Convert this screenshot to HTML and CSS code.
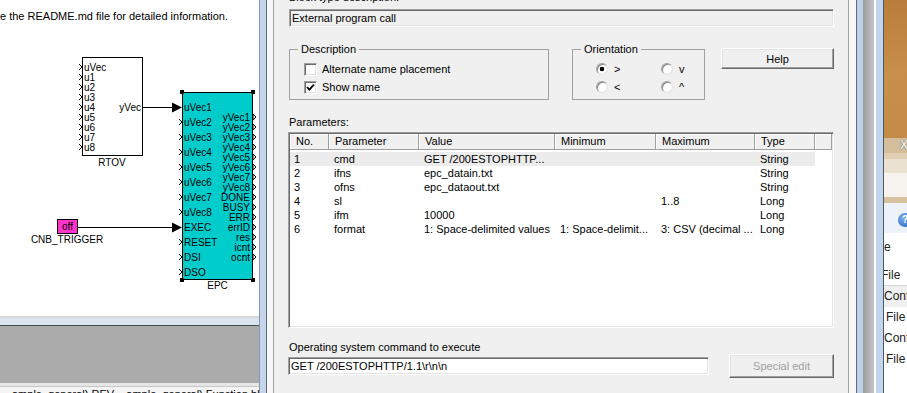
FILE: index.html
```
<!doctype html>
<html>
<head>
<meta charset="UTF-8">
<link rel="stylesheet" href="styles.css">
</head>
<body>

<div class="canvas">
  <svg class="diagram" width="259" height="316" viewBox="0 0 259 316">
    <text class="note" x="0" y="20">e the README.md file for detailed information.</text>

    <!-- RTOV -->
    <rect x="82.5" y="57.5" width="60" height="98" fill="#fff" stroke="#000"/>
    <path fill="none" stroke="#000" d="M79 64l3 3-3 3M79 74l3 3-3 3M79 84l3 3-3 3M79 94l3 3-3 3M79 104l3 3-3 3M79 114l3 3-3 3M79 124l3 3-3 3M79 134l3 3-3 3M79 144l3 3-3 3"/>
    <text x="84" y="70.5">uVec</text>
    <text x="84" y="80.5">u1</text>
    <text x="84" y="90.5">u2</text>
    <text x="84" y="100.5">u3</text>
    <text x="84" y="110.5">u4</text>
    <text x="84" y="120.5">u5</text>
    <text x="84" y="130.5">u6</text>
    <text x="84" y="140.5">u7</text>
    <text x="84" y="150.5">u8</text>
    <text x="141" y="110.5" text-anchor="end">yVec</text>
    <text x="112" y="165.5" text-anchor="middle">RTOV</text>

    <!-- wires -->
    <path stroke="#000" d="M143 107.5H173M77 227.5H173"/>
    <polygon points="172,102.5 182,107.5 172,112.5"/>
    <polygon points="172,222.5 182,227.5 172,232.5"/>

    <!-- EPC -->
    <rect x="182.5" y="92.5" width="70" height="187" fill="#00cccc" stroke="#000"/>
    <rect x="180" y="90" width="4" height="4"/><rect x="183" y="93" width="1" height="1" fill="#f00"/>
    <rect x="251" y="90" width="4" height="4"/><rect x="251" y="93" width="1" height="1" fill="#f00"/>
    <rect x="180" y="278" width="4" height="4"/><rect x="183" y="278" width="1" height="1" fill="#f00"/>
    <rect x="251" y="278" width="4" height="4"/><rect x="251" y="278" width="1" height="1" fill="#f00"/>
    <path fill="none" stroke="#000" d="M179 119l3 3-3 3M179 134l3 3-3 3M179 149l3 3-3 3M179 164l3 3-3 3M179 179l3 3-3 3M179 194l3 3-3 3M179 209l3 3-3 3M179 239l3 3-3 3M179 254l3 3-3 3M179 269l3 3-3 3"/>
    <path fill="#fff" stroke="#000" d="M253 114l3 3-3 3zM253 124l3 3-3 3zM253 134l3 3-3 3zM253 144l3 3-3 3zM253 154l3 3-3 3zM253 164l3 3-3 3zM253 174l3 3-3 3zM253 184l3 3-3 3zM253 194l3 3-3 3zM253 204l3 3-3 3zM253 214l3 3-3 3zM253 224l3 3-3 3zM253 234l3 3-3 3zM253 244l3 3-3 3zM253 254l3 3-3 3z"/>
    <text x="184" y="111">uVec1</text>
    <text x="184" y="126">uVec2</text>
    <text x="184" y="141">uVec3</text>
    <text x="184" y="156">uVec4</text>
    <text x="184" y="171">uVec5</text>
    <text x="184" y="186">uVec6</text>
    <text x="184" y="201">uVec7</text>
    <text x="184" y="216">uVec8</text>
    <text x="184" y="231">EXEC</text>
    <text x="184" y="246">RESET</text>
    <text x="184" y="261">DSI</text>
    <text x="184" y="276">DSO</text>
    <g text-anchor="end">
      <text x="250" y="120.5">yVec1</text>
      <text x="250" y="130.5">yVec2</text>
      <text x="250" y="140.5">yVec3</text>
      <text x="250" y="150.5">yVec4</text>
      <text x="250" y="160.5">yVec5</text>
      <text x="250" y="170.5">yVec6</text>
      <text x="250" y="180.5">yVec7</text>
      <text x="250" y="190.5">yVec8</text>
      <text x="250" y="200.5">DONE</text>
      <text x="250" y="210.5">BUSY</text>
      <text x="250" y="220.5">ERR</text>
      <text x="250" y="230.5">errID</text>
      <text x="250" y="240.5">res</text>
      <text x="250" y="250.5">icnt</text>
      <text x="250" y="260.5">ocnt</text>
    </g>
    <text x="217.5" y="289" text-anchor="middle">EPC</text>

    <!-- trigger -->
    <rect x="57.5" y="219.5" width="20" height="14" fill="#ff33cc" stroke="#000"/>
    <text x="67.5" y="230" text-anchor="middle">off</text>
    <text x="67" y="243" text-anchor="middle">CNB_TRIGGER</text>
  </svg>
  <div class="cv-edge"></div>
  <div class="cv-blue"></div>
  <div class="cv-dark"></div>
  <div class="cv-gray"></div>
  <div class="cv-light"></div>
  <div class="cv-status"><span>ample_general) REV&nbsp;&nbsp;&nbsp;&nbsp;ample_general) Function bl</span></div>
</div>

<div class="frame-l"></div>

<div class="dlg">
  <div class="cut-label">Block type description:</div>
  <div class="edit sunken ro">External program call</div>

  <div class="groups">
    <fieldset class="grp desc">
      <legend>Description</legend>
      <div class="opts">
        <div class="opt"><span class="chk sunken"></span>Alternate name placement</div>
        <div class="opt"><span class="chk sunken"><svg width="9" height="9" viewBox="0 0 9 9"><polyline points="1,4 3.3,6.6 8,1.6" fill="none" stroke="#000" stroke-width="1.8"/></svg></span>Show name</div>
      </div>
    </fieldset>
    <fieldset class="grp orient">
      <legend>Orientation</legend>
      <div class="radios">
        <div class="opt"><span class="rad on"></span>&gt;</div>
        <div class="opt"><span class="rad"></span>v</div>
        <div class="opt"><span class="rad"></span>&lt;</div>
        <div class="opt"><span class="rad"></span>^</div>
      </div>
    </fieldset>
    <div class="btn help">Help</div>
  </div>

  <div class="lbl params-lbl">Parameters:</div>
  <div class="list sunken">
    <div class="hdr">
      <div>No.</div><div>Parameter</div><div>Value</div><div>Minimum</div><div>Maximum</div><div>Type</div><div></div>
    </div>
    <div class="rows">
      <div class="r sel"><div>1</div><div>cmd</div><div>GET /200ESTOPHTTP...</div><div></div><div></div><div>String</div><div class="x"></div></div>
      <div class="r"><div>2</div><div>ifns</div><div>epc_datain.txt</div><div></div><div></div><div>String</div><div class="x"></div></div>
      <div class="r"><div>3</div><div>ofns</div><div>epc_dataout.txt</div><div></div><div></div><div>String</div><div class="x"></div></div>
      <div class="r"><div>4</div><div>sl</div><div></div><div></div><div>1..8</div><div>Long</div><div class="x"></div></div>
      <div class="r"><div>5</div><div>ifm</div><div>10000</div><div></div><div></div><div>Long</div><div class="x"></div></div>
      <div class="r"><div>6</div><div>format</div><div>1: Space-delimited values</div><div>1: Space-delimit...</div><div>3: CSV (decimal ...</div><div>Long</div><div class="x"></div></div>
    </div>
  </div>

  <div class="lbl cmd-lbl">Operating system command to execute</div>
  <div class="cmd-row">
    <div class="edit sunken cmd-edit">GET /200ESTOPHTTP/1.1\r\n\n</div>
    <div class="btn special">Special edit</div>
  </div>
</div>

<div class="frame-r"></div>

<div class="other">
  <div class="o-wood"></div>
  <div class="o-tab"><span class="o-x">X</span></div>
  <div class="o-b1"></div>
  <div class="o-b2"></div>
  <div class="o-b3"></div>
  <div class="o-b4"></div>
  <div class="o-b5"><span class="o-help">?</span></div>
  <div class="o-list">
    <div class="o-i first">e</div>
    <div class="o-i file1">File</div>
    <div class="o-i conf hl">Conf</div>
    <div class="o-i file">File</div>
    <div class="o-i conf">Conf</div>
    <div class="o-i file">File</div>
  </div>
</div>

</body>
</html>
```

FILE: styles.css
```
body {
  margin: 0;
  width: 907px;
  height: 393px;
  overflow: hidden;
  display: flex;
  background: #f0f0f0;
  font-family: "Liberation Sans", Arial, sans-serif;
  font-size: 11px;
  color: #000;
}

/* ---- diagram canvas ---- */
.canvas { width: 259px; flex: none; display: flex; flex-direction: column; background: #fff; overflow: hidden; }
.canvas > * { flex: none; }
.diagram { display: block; }
.diagram text { font-family: "Liberation Sans", Arial, sans-serif; font-size: 10px; }
.diagram .note { font-size: 11px; }
.cv-edge { height: 2px; background: #d9d9d9; }
.cv-blue { height: 7px; background: #dbe5f2; }
.cv-dark { height: 1px; background: #4a4a4a; }
.cv-gray { height: 57px; background: #ababab; }
.cv-light { height: 3px; background: #e6e6e6; border-bottom: 1px solid #c8c8c8; }
.cv-status { height: 6px; overflow: hidden; white-space: nowrap; padding-left: 12px; background: #f4f4f4; }
.cv-status span { display: block; line-height: 13px; margin-top: 1px; }

/* ---- window frames ---- */
.frame-l {
  width: 15px; flex: none;
  background: linear-gradient(to right, #8496ad 0 1px, #c5d6ea 1px 7px, #5e6c7d 7px 8px, #f7f7f7 8px 14px, #a0a0a0 14px 15px);
}
.frame-r {
  width: 36px; flex: none;
  background: linear-gradient(to right, #a0a0a0 0 1px, #f7f7f7 1px 8px, #5d6b7b 8px 9px, #bcd0e6 9px 15px, #9b9b9b 15px, #c6c6c6 26px, #fff 26px 28px, #c3d5ea 28px 35px, #4e5966 35px 36px);
}

/* ---- dialog ---- */
.dlg { width: 574px; flex: none; box-sizing: border-box; padding: 0 14px; display: flex; flex-direction: column; }
.cut-label { margin-top: -9px; line-height: 13px; padding-left: 1px; }

.sunken {
  border: 1px solid;
  border-color: #a0a0a0 #fff #fff #a0a0a0;
  box-shadow: inset 1px 1px #696969, inset -1px -1px #e3e3e3;
}
.edit { height: 18px; box-sizing: border-box; line-height: 16px; padding: 0 2px; white-space: nowrap; overflow: hidden; background: #fff; }
.ro { margin: 5px 0 0 1px; background: #f0f0f0; }

.groups { display: flex; align-items: flex-start; margin-top: 16px; }
.grp { margin: 0; padding: 5px 0 3px 0; border: 1px solid #a0a0a0; box-sizing: border-box; min-width: 0; }
.grp legend { margin-left: 8px; padding: 0 3px; line-height: 12px; }
.desc { width: 260px; margin-left: 1px; }
.orient { width: 133px; margin-left: 23px; }
.opts { padding-left: 14px; }
.opt { height: 18px; display: flex; align-items: center; white-space: nowrap; }
.chk { width: 13px; height: 13px; box-sizing: border-box; background: #fff; margin-right: 5px; display: flex; align-items: center; justify-content: center; }
.radios { display: grid; grid-template-columns: 65px auto; padding-left: 23px; }
.rad {
  width: 12px; height: 12px; box-sizing: border-box; border-radius: 50%; margin-right: 6px;
  border: 1px solid; border-color: #a0a0a0 #e3e3e3 #e3e3e3 #a0a0a0;
  background: radial-gradient(circle, #fff 0 60%, #eaeaea 100%);
  box-shadow: inset 1px 1px #8a8a8a;
}
.rad.on { background: radial-gradient(circle, #000 0 2px, #fff 2.6px); }

.btn {
  box-sizing: border-box; display: flex; align-items: center; justify-content: center;
  background: #f0f0f0; border: 1px solid; border-color: #fff #696969 #696969 #fff;
  box-shadow: inset -1px -1px #a0a0a0, inset 1px 1px #e3e3e3;
}
.help { margin: 5px 0 0 16px; width: 113px; height: 21px; }

.lbl { line-height: 13px; }
.params-lbl { margin-top: 16px; padding-left: 1px; }

.list { margin-top: 3px; height: 196px; box-sizing: border-box; padding: 1px; background: #fff; }
.hdr, .r { display: grid; grid-template-columns: 39px 90px 136px 101px 99px 60px 1fr; }
.hdr { height: 16px; }
.hdr > div {
  box-sizing: border-box; background: #f0f0f0; line-height: 15px; padding-left: 6px;
  border-right: 1px solid #a0a0a0; border-bottom: 1px solid #a0a0a0; box-shadow: inset 1px 1px #fff;
  white-space: nowrap; overflow: hidden;
}
.rows { padding-top: 2px; }
.r { height: 14px; line-height: 14px; }
.r > div { padding-left: 5px; white-space: nowrap; overflow: hidden; }
.r > div:first-child { padding-left: 4px; }
.r.sel > div { background: #ececec; }
.r.sel > div.x { background: none; }

.cmd-lbl { margin-top: 13px; padding-left: 1px; }
.cmd-row { display: flex; align-items: center; height: 24px; }
.cmd-edit { width: 421px; }
.special { margin-left: 20px; width: 105px; height: 24px; color: #a0a0a0; }

/* ---- neighbouring window ---- */
.other { width: 23px; flex: none; display: flex; flex-direction: column; overflow: hidden; background: #fff; white-space: nowrap; font-size: 12px; }
.other > * { flex: none; }
.o-wood { height: 138px; background: linear-gradient(#b97c3c, #c98f4c 55%, #c48a48); }
.o-tab { height: 15px; background: #d3bd9b; padding-left: 16px; line-height: 15px; }
.o-x { font-weight: bold; font-size: 12px; color: #eee; text-shadow: 0 0 1px #333; }
.o-b1 { height: 6px; background: #e0cfb3; }
.o-b2 { height: 14px; background: #ebe1d1; }
.o-b3 { height: 24px; background: #f7f4ef; }
.o-b4 { height: 6px; background: #d7c19f; }
.o-b5 { height: 30px; background: #eef3fa; padding: 9px 0 0 14px; box-sizing: border-box; }
.o-help {
  display: inline-block; width: 14px; height: 14px; border-radius: 50%;
  background: radial-gradient(circle at 40% 35%, #7fb0ef, #1f5fbf);
  color: #fff; font-weight: bold; font-size: 10px; line-height: 14px; text-align: center;
}
.o-list { padding-top: 4px; }
.o-i { height: 21px; line-height: 21px; color: #222; }
.file1 { margin-top: 7px; text-indent: -3px; border-bottom: 1px solid #d6d6d6; box-sizing: border-box; }
.file { padding-left: 2px; }
.hl { background: #f0f0f0; }
```
